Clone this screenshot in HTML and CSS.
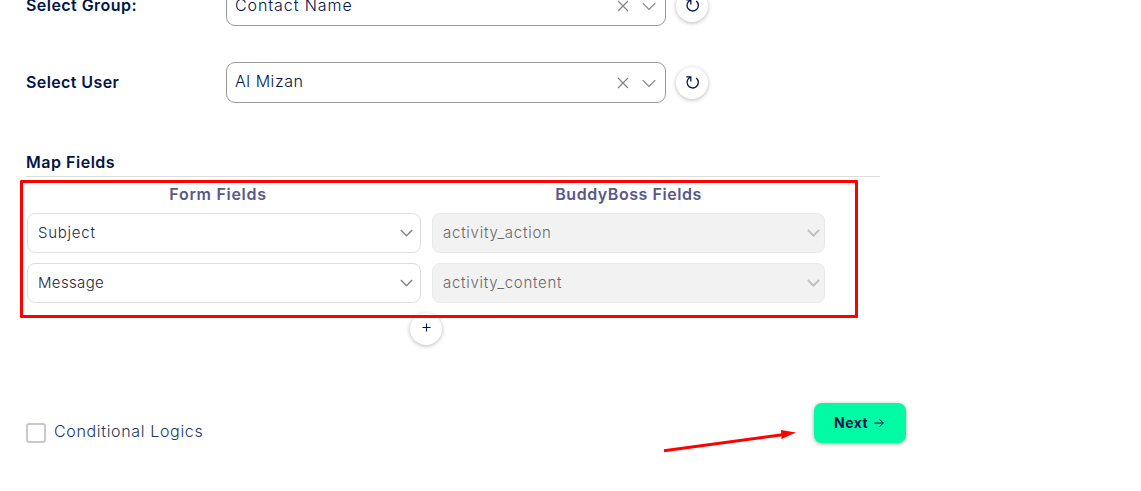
FILE: index.html
```
<!DOCTYPE html>
<html lang="en">
<head>
<meta charset="utf-8">
<title>Integration settings</title>
<link rel="stylesheet" href="styles.css">
</head>
<body>
<svg class="defs" width="0" height="0" aria-hidden="true">
  <symbol id="close" viewBox="0 0 12 12"><path d="M1 1l10 10M11 1L1 11"/></symbol>
  <symbol id="chevron" viewBox="0 0 14 9"><path d="M.7 1.2L7 7.5l6.300-6.300"/></symbol>
  <symbol id="reload" viewBox="0 0 16 16"><path d="M1.300 2H6.200V6.800M5.700 2.400A6 6 0 1 0 12 3.200"/></symbol>
</svg>
<main class="page">
  <div class="row">
    <label class="label group">Select Group:</label>
    <div class="picker"><span class="value contact">Contact Name</span><svg class="close"><use href="#close"/></svg><svg class="chevron"><use href="#chevron"/></svg></div>
    <button class="round"><svg class="reload"><use href="#reload"/></svg></button>
  </div>
  <div class="row">
    <label class="label user">Select User</label>
    <div class="picker"><span class="value mizan">Al Mizan</span><svg class="close"><use href="#close"/></svg><svg class="chevron"><use href="#chevron"/></svg></div>
    <button class="round"><svg class="reload"><use href="#reload"/></svg></button>
  </div>
  <h2 class="section"><span class="map">Map Fields</span></h2>
  <div class="grid">
    <div class="head"><span class="form">Form Fields</span></div>
    <div class="head"><span class="buddy">BuddyBoss Fields</span></div>
    <div class="select"><span class="subject">Subject</span><svg class="arrow"><use href="#chevron"/></svg></div>
    <div class="select disabled"><span class="action">activity_action</span><svg class="arrow"><use href="#chevron"/></svg></div>
    <div class="select"><span class="message">Message</span><svg class="arrow"><use href="#chevron"/></svg></div>
    <div class="select disabled"><span class="content">activity_content</span><svg class="arrow"><use href="#chevron"/></svg></div>
  </div>
  <div class="add"><button class="round"><svg class="plus" viewBox="0 0 10 10"><path d="M5 .5v9M.5 5h9"/></svg></button></div>
  <div class="footer">
    <label class="check"><span class="box"></span><span class="logic">Conditional Logics</span></label>
    <button class="next"><span class="nexttext">Next</span><svg class="go" viewBox="0 0 10 10"><path d="M.3 5h9M5.500 1.200L9.300 5 5.500 8.800"/></svg></button>
  </div>
</main>
<div class="highlight"></div>
<svg class="pointer" viewBox="0 0 140 30"><path class="shaft" d="M4 20.800L126 4.300"/><path class="tip" d="M121 0l15 2.500-14.500 6.500z"/></svg>
</body>
</html>
```
FILE: styles.css
```
* { box-sizing: border-box; }
body { margin: 0; height: 491px; overflow: hidden; background: #fff; color: #001648; font: 300 16px Inter, "Open Sans", sans-serif; }
svg { flex: none; fill: none; stroke: currentColor; overflow: visible; }
.defs { position: absolute; }
.page { width: 880px; margin-top: -15px; padding-left: 26px; }
.row { display: flex; align-items: center; height: 41px; margin-bottom: 36px; }
.label { width: 200px; padding-bottom: 2px; font-weight: 600; }
.group { letter-spacing: .45px; }
.user { letter-spacing: .4px; }
.picker { display: flex; align-items: center; width: 440px; height: 41px; padding: 0 9px 0 8px; border: 1px solid #999; border-radius: 9px; color: #858585; }
.value { color: #001648; margin: 0 auto 2px 0; white-space: nowrap; }
.contact { letter-spacing: .92px; }
.mizan { letter-spacing: .55px; margin-bottom: 3px; }
.close { width: 12px; height: 12px; margin-right: 13px; stroke-width: 1.200; }
.chevron { width: 14px; height: 9px; margin-top: 2px; stroke-width: 1.200; }
.round { display: flex; align-items: center; justify-content: center; width: 32px; height: 32px; padding: 0; border: 0; border-radius: 50%; background: #fff; color: #001648; box-shadow: 0 1px 4px rgba(0,0,0,.28); }
.row .round { margin-left: 10px; }
.reload { width: 15px; height: 15px; stroke-width: 1.400; }
.section { display: flex; height: 38px; margin: 0 0 4px; border-bottom: 1px solid #dedede; padding-top: 13px; font-size: 16px; line-height: 20px; font-weight: 600; letter-spacing: .52px; }
.grid { display: grid; grid-template: 32px 40px 10px 40px / 394px 393px; column-gap: 11px; padding-left: 1px; }
.head { display: flex; justify-content: center; align-items: flex-start; padding-top: 3px; font-weight: 600; line-height: 20px; color: #57598a; }
.head:first-child { padding-right: 12px; }
.form { letter-spacing: .7px; }
.buddy { letter-spacing: .55px; }
.select { display: flex; align-items: center; justify-content: space-between; height: 40px; padding: 0 7px 1px 10px; border: 1px solid #dfdfdf; border-radius: 8px; color: #222b40; font-size: 15px; }
.select:nth-child(n + 5) { grid-row: 4; }
.subject { letter-spacing: .75px; }
.message { letter-spacing: .35px; }
.action { letter-spacing: .75px; }
.content { letter-spacing: .73px; }
.arrow { width: 13px; height: 8px; margin-top: 1px; color: #858585; stroke-width: 1.700; }
.disabled { padding-right: 4px; background: #f2f2f2; border-color: #e9e9e9; color: #686868; }
.disabled .arrow { color: #bfc1c5; stroke-width: 2.300; }
.add { padding: 10px 0 0 384px; }
.plus { width: 9px; height: 9px; margin-bottom: 3px; stroke-width: 1.200; }
.footer { display: flex; justify-content: space-between; width: 880px; margin-top: 58px; }
.check { display: flex; align-items: center; height: 60px; gap: 8px; color: #26365e; }
.box { width: 20px; height: 20px; border: 2px solid #c6c8d2; border-radius: 3px; }
.logic { margin-bottom: 4px; letter-spacing: .66px; }
.next { display: flex; align-items: center; height: 40px; width: 92px; padding: 0 0 0 20px; gap: 6px; border: 0; border-radius: 8px; background: #00fba5; color: #001648; box-shadow: 0 1px 4px rgba(0,0,0,.35); font: 700 14px Inter, sans-serif; }
.nexttext { margin-bottom: 2px; letter-spacing: .5px; }
.go { width: 10px; height: 10px; }
.highlight { position: absolute; left: 20px; top: 180px; width: 838px; height: 138px; border: 3px solid #f00; border-radius: 1px; }
.pointer { position: absolute; left: 660px; top: 430px; width: 140px; height: 30px; color: #f00; }
.shaft { stroke-width: 3; }
.tip { fill: #f00; stroke: none; }
```
